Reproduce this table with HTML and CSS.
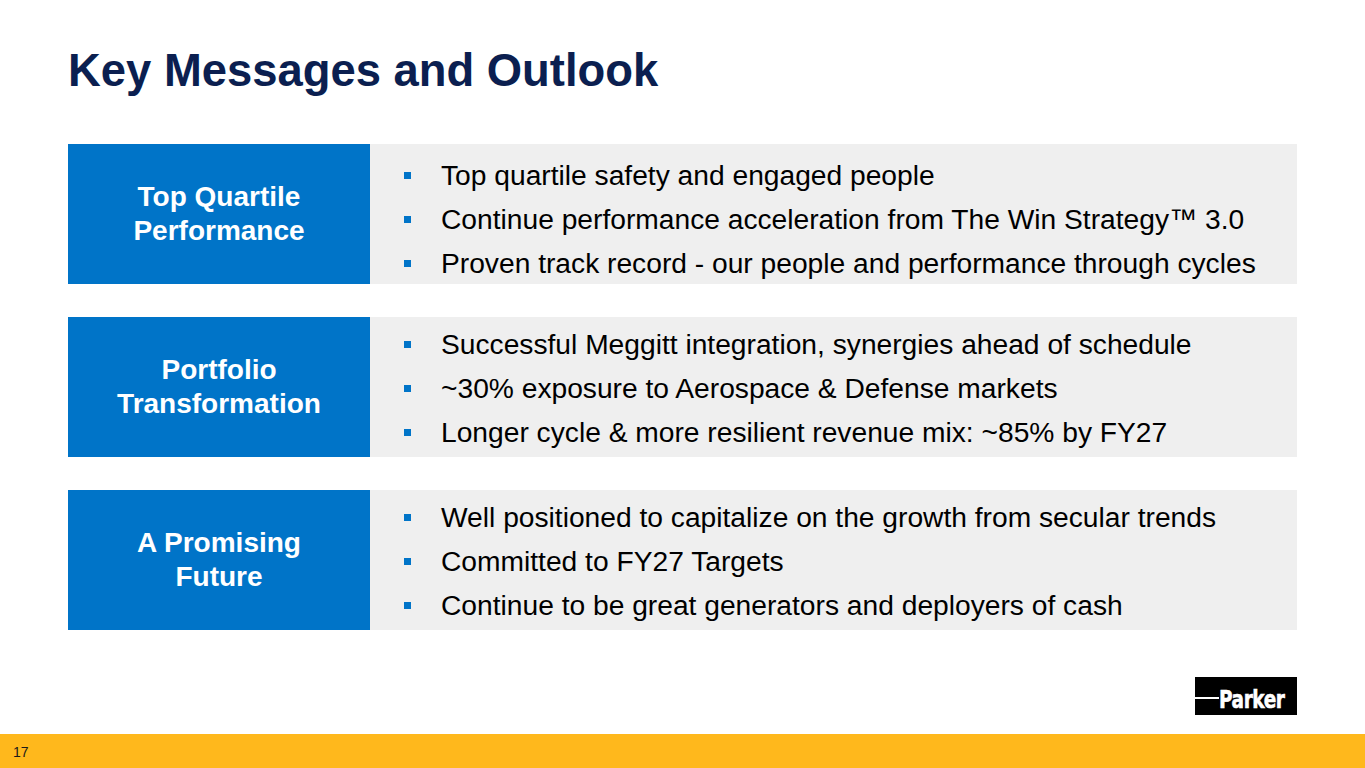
FILE: index.html
```html
<!DOCTYPE html>
<html lang="en">
<head>
<meta charset="utf-8">
<title>Key Messages and Outlook</title>
<link rel="stylesheet" href="styles.css">
</head>
<body>
<div class="slide">
  <h1 class="title">Key Messages and Outlook</h1>

  <div class="rows">
    <section class="row row--first">
      <div class="label">Top Quartile<br>Performance</div>
      <ul class="bullets">
        <li>Top quartile safety and engaged people</li>
        <li>Continue performance acceleration from The Win Strategy™ 3.0</li>
        <li>Proven track record - our people and performance through cycles</li>
      </ul>
    </section>
    <section class="row">
      <div class="label">Portfolio<br>Transformation</div>
      <ul class="bullets">
        <li>Successful Meggitt integration, synergies ahead of schedule</li>
        <li>~30% exposure to Aerospace &amp; Defense markets</li>
        <li>Longer cycle &amp; more resilient revenue mix: ~85% by FY27</li>
      </ul>
    </section>
    <section class="row">
      <div class="label">A Promising<br>Future</div>
      <ul class="bullets">
        <li>Well positioned to capitalize on the growth from secular trends</li>
        <li>Committed to FY27 Targets</li>
        <li>Continue to be great generators and deployers of cash</li>
      </ul>
    </section>
  </div>

  <div class="brand">
    <div class="logo">
      <span class="logo-line"></span>
      <span class="logo-text">Parker</span>
    </div>
  </div>

  <footer class="footer">17</footer>
</div>
</body>
</html>
```

FILE: styles.css
```css
html, body {
  margin: 0;
  padding: 0;
  background: #ffffff;
}

.slide {
  width: 1365px;
  height: 768px;
  display: flex;
  flex-direction: column;
  font-family: "Liberation Sans", Arial, sans-serif;
  overflow: hidden;
}

.title {
  margin: 0;
  padding: 48px 0 0 68px;
  font-size: 45.4px;
  line-height: 46px;
  font-weight: 700;
  color: #0b1f50;
}

.rows {
  margin: 50px 0 0 68px;
  width: 1229px;
  display: flex;
  flex-direction: column;
  gap: 33px;
}

.row {
  display: flex;
  height: 140px;
  background: #efefef;
}

.label {
  width: 302px;
  flex: none;
  background: #0074c8;
  color: #ffffff;
  font-weight: 700;
  font-size: 28px;
  line-height: 34px;
  text-align: center;
  display: flex;
  align-items: center;
  justify-content: center;
}

.bullets {
  list-style: none;
  margin: 0;
  padding: 5px 0 0 34px;
  font-size: 28.2px;
  line-height: 44px;
  color: #000000;
}

.row--first .bullets {
  padding-top: 9px;
}

.bullets li {
  display: flex;
  align-items: center;
  white-space: nowrap;
}

.bullets li::before {
  content: "";
  width: 7px;
  height: 7px;
  flex: none;
  background: #0074c8;
  margin-right: 30px;
}

.brand {
  margin-top: auto;
  display: flex;
  justify-content: flex-end;
  padding: 0 68px 19px 0;
}

.logo {
  width: 102px;
  height: 38px;
  background: #000000;
  display: flex;
  align-items: center;
  overflow: hidden;
}

.logo-line {
  width: 24px;
  height: 2px;
  flex: none;
  margin-top: 4px;
  background: #ffffff;
}

.logo-text {
  margin-top: 7px;
  font-family: "DejaVu Sans", sans-serif;
  font-weight: 700;
  font-size: 25px;
  line-height: 24px;
  color: #ffffff;
  -webkit-text-stroke: 0.6px #ffffff;
  letter-spacing: -0.6px;
  transform: scaleX(0.74);
  transform-origin: left center;
}

.footer {
  height: 34px;
  box-sizing: border-box;
  flex: none;
  background: #ffb81c;
  padding: 8px 0 0 13px;
  font-size: 14px;
  line-height: 20px;
  color: #1a1a1a;
}
```
